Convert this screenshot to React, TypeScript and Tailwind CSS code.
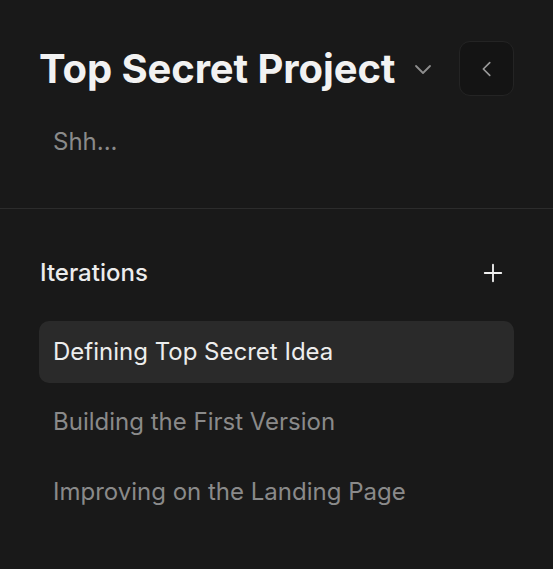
import React from 'react';

const iterations = [
    'Defining Top Secret Idea',
    'Building the First Version',
    'Improving on the Landing Page',
];

const ChevronDown = () => (
    <svg width="24" height="24" viewBox="0 0 24 24" fill="none" stroke="currentColor" strokeWidth="1.8" strokeLinecap="round" strokeLinejoin="round">
        <path d="M5 9l7 7 7-7" />
    </svg>
);

const ChevronLeft = () => (
    <svg width="22" height="22" viewBox="0 0 24 24" fill="none" stroke="currentColor" strokeWidth="1.8" strokeLinecap="round" strokeLinejoin="round">
        <path d="M15 5l-7 7 7 7" />
    </svg>
);

const PlusIcon = () => (
    <svg width="22" height="22" viewBox="0 0 24 24" fill="none" stroke="currentColor" strokeWidth="2" strokeLinecap="round">
        <path d="M12 3v18M3 12h18" />
    </svg>
);

export default function App() {
    return (
        <div className="w-[553px] h-[569px] bg-[#191919] overflow-hidden" style={{ fontFamily: 'Inter, "Noto Sans", sans-serif' }}>
            <div className="px-[39px] pt-[41px] pb-[54px] border-b border-[#2c2c2c]">
                <div className="flex items-center justify-between">
                    <div className="flex items-center gap-[16px]">
                        <h1 className="text-[40px] font-bold text-[#f2f2f2] leading-none tracking-[-0.1px]">Top Secret Project</h1>
                        <span className="text-[#8e8e8e] mt-[1px]"><ChevronDown /></span>
                    </div>
                    <button className="w-[55px] h-[55px] rounded-[11px] bg-[#141414] border border-[#242424] flex items-center justify-center text-[#9a9a9a]">
                        <ChevronLeft />
                    </button>
                </div>
                <p className="mt-[34px] pl-[14px] text-[24px] text-[#8a8a8a] leading-none">Shh...</p>
            </div>

            <div className="px-[39px] pt-[52px]">
                <div className="flex items-center justify-between pl-[1px] pr-[10px]">
                    <h2 className="text-[24px] font-medium text-[#ececec] leading-none">Iterations</h2>
                    <span className="text-[#f0f0f0]"><PlusIcon /></span>
                </div>
                <ul className="mt-[36px] flex flex-col gap-[8px]">
                    {iterations.map((item, i) => (
                        <li
                            key={item}
                            className={`h-[62px] flex items-center px-[14px] rounded-[10px] text-[24px] ${i === 0 ? 'bg-[#2a2a2a] text-[#ededed]' : 'text-[#8a8a8a]'}`}
                        >
                            {item}
                        </li>
                    ))}
                </ul>
            </div>
        </div>
    );
}
